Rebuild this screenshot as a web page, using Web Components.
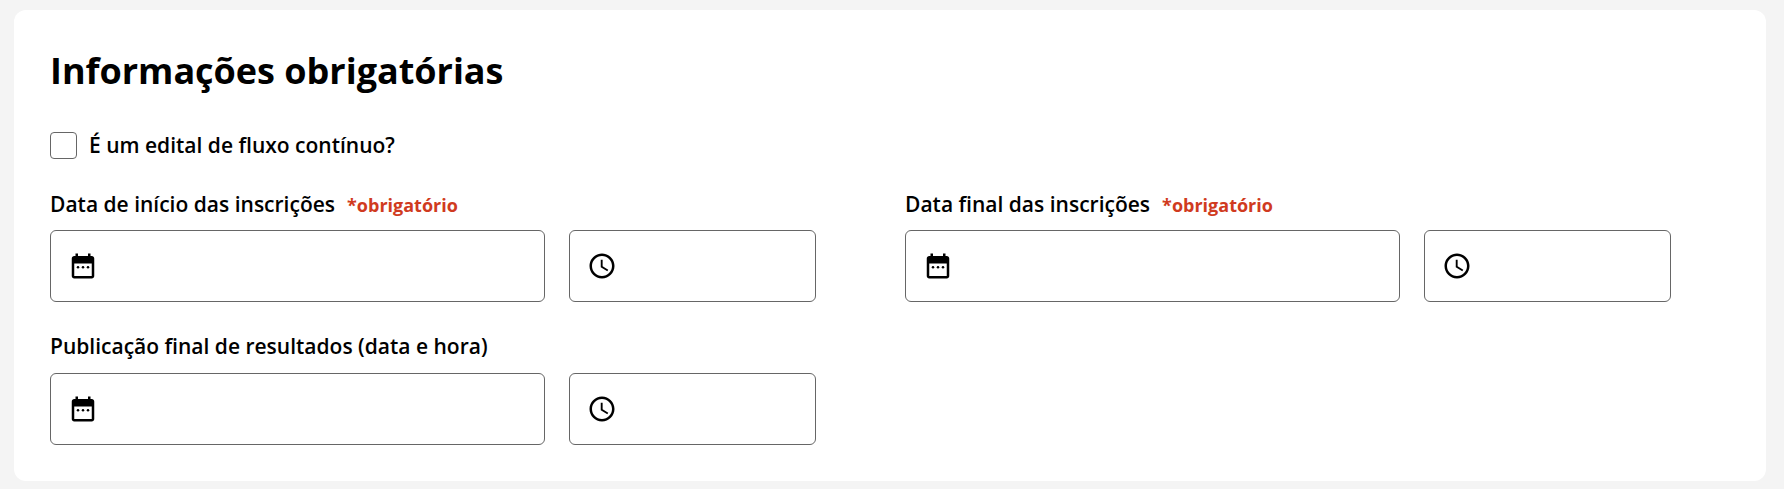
<!DOCTYPE html>
<html lang="pt-BR">
<head>
<meta charset="utf-8">
<title>Informações obrigatórias</title>
<style>
  body { margin: 0; background: #f4f4f4; color: #000; font-family: "Open Sans", "Noto Sans", sans-serif; }
</style>
</head>
<body>
<form-card>
  <span slot="title">Informações obrigatórias</span>
  <check-option>É um edital de fluxo contínuo?</check-option>
  <field-grid>
    <date-time-field required>Data de início das inscrições</date-time-field>
    <date-time-field required>Data final das inscrições</date-time-field>
    <date-time-field>Publicação final de resultados (data e hora)</date-time-field>
  </field-grid>
</form-card>
<script>
  const define = (name, html) => customElements.define(name, class extends HTMLElement {
    constructor() {
      super();
      this.attachShadow({ mode: "open" }).innerHTML = html;
    }
  });

  define("form-card", `
    <style>
      :host { display: block; box-sizing: border-box; height: 471px; margin: 10px 18px 0 14px; padding: 36px 36px 0; background: #fff; border-radius: 12px; }
      h2 { margin: 0 0 37px; font-size: 36px; line-height: 49px; font-weight: 700; letter-spacing: -0.02px; }
    </style>
    <h2><slot name="title"></slot></h2>
    <slot></slot>`);

  define("check-option", `
    <style>
      :host { display: block; }
      label { display: flex; align-items: center; gap: 12px; height: 27px; font-size: 21px; font-weight: 600; line-height: 27px; }
      input { appearance: none; box-sizing: border-box; width: 27px; height: 27px; margin: 0; border: 1px solid #666; border-radius: 4px; background: #fff; }
    </style>
    <label><input type="checkbox"><span><slot></slot></span></label>`);

  define("field-grid", `
    <style>
      :host { display: grid; grid-template-columns: 766px 766px; column-gap: 89px; row-gap: 30px; margin-top: 31px; }
    </style>
    <slot></slot>`);
  
  define("svg-calendar", `
    <style>:host, svg { display: block; }</style>
    <svg width="30" height="30" viewBox="0 0 24 24"><path fill-rule="evenodd" d="M5 22c-1.1 0-2-.9-2-2V6c0-1.1.9-2 2-2h1V2h2v2h8V2h2v2h1c1.1 0 2 .9 2 2v14c0 1.1-.9 2-2 2zm0-2h14V10H5z"/><circle cx="8" cy="13" r="1"/><circle cx="12" cy="13" r="1"/><circle cx="16" cy="13" r="1"/></svg>`);

  define("svg-clock", `
    <style>:host, svg { display: block; }</style>
    <svg width="30" height="30" viewBox="0 0 24 24"><path d="M11.99 2C6.47 2 2 6.48 2 12s4.47 10 9.99 10C17.52 22 22 17.52 22 12S17.52 2 11.99 2zM12 20c-4.42 0-8-3.58-8-8s3.58-8 8-8 8 3.58 8 8-3.58 8-8 8z"/><path d="M12.5 7H11v6l5.25 3.15.75-1.23-4.5-2.67z"/></svg>`);

  define("input-box", `
    <style>
      :host { display: flex; align-items: center; box-sizing: border-box; height: 72px; padding: 0 17px; border: 1px solid #666; border-radius: 6px; background: #fff; }
    </style>
    <slot></slot>`);

  define("date-time-field", `
    <style>
      :host { display: block; }
      .label { display: flex; align-items: baseline; gap: 12px; height: 29px; margin-bottom: 12px; font-size: 21px; line-height: 29px; font-weight: 600; white-space: nowrap; }
      .required { display: none; color: #d03a20; font-size: 18px; font-weight: 700; }
      :host([required]) .required { display: inline; }
      :host([required]) .label { margin-bottom: 11px; }
      .inputs { display: grid; grid-template-columns: 495px 247px; gap: 24px; }
    </style>
    <div class="label"><span><slot></slot></span><span class="required">*obrigatório</span></div>
    <div class="inputs">
      <input-box><svg-calendar></svg-calendar></input-box>
      <input-box><svg-clock></svg-clock></input-box>
    </div>`);
</script>
</body>
</html>
